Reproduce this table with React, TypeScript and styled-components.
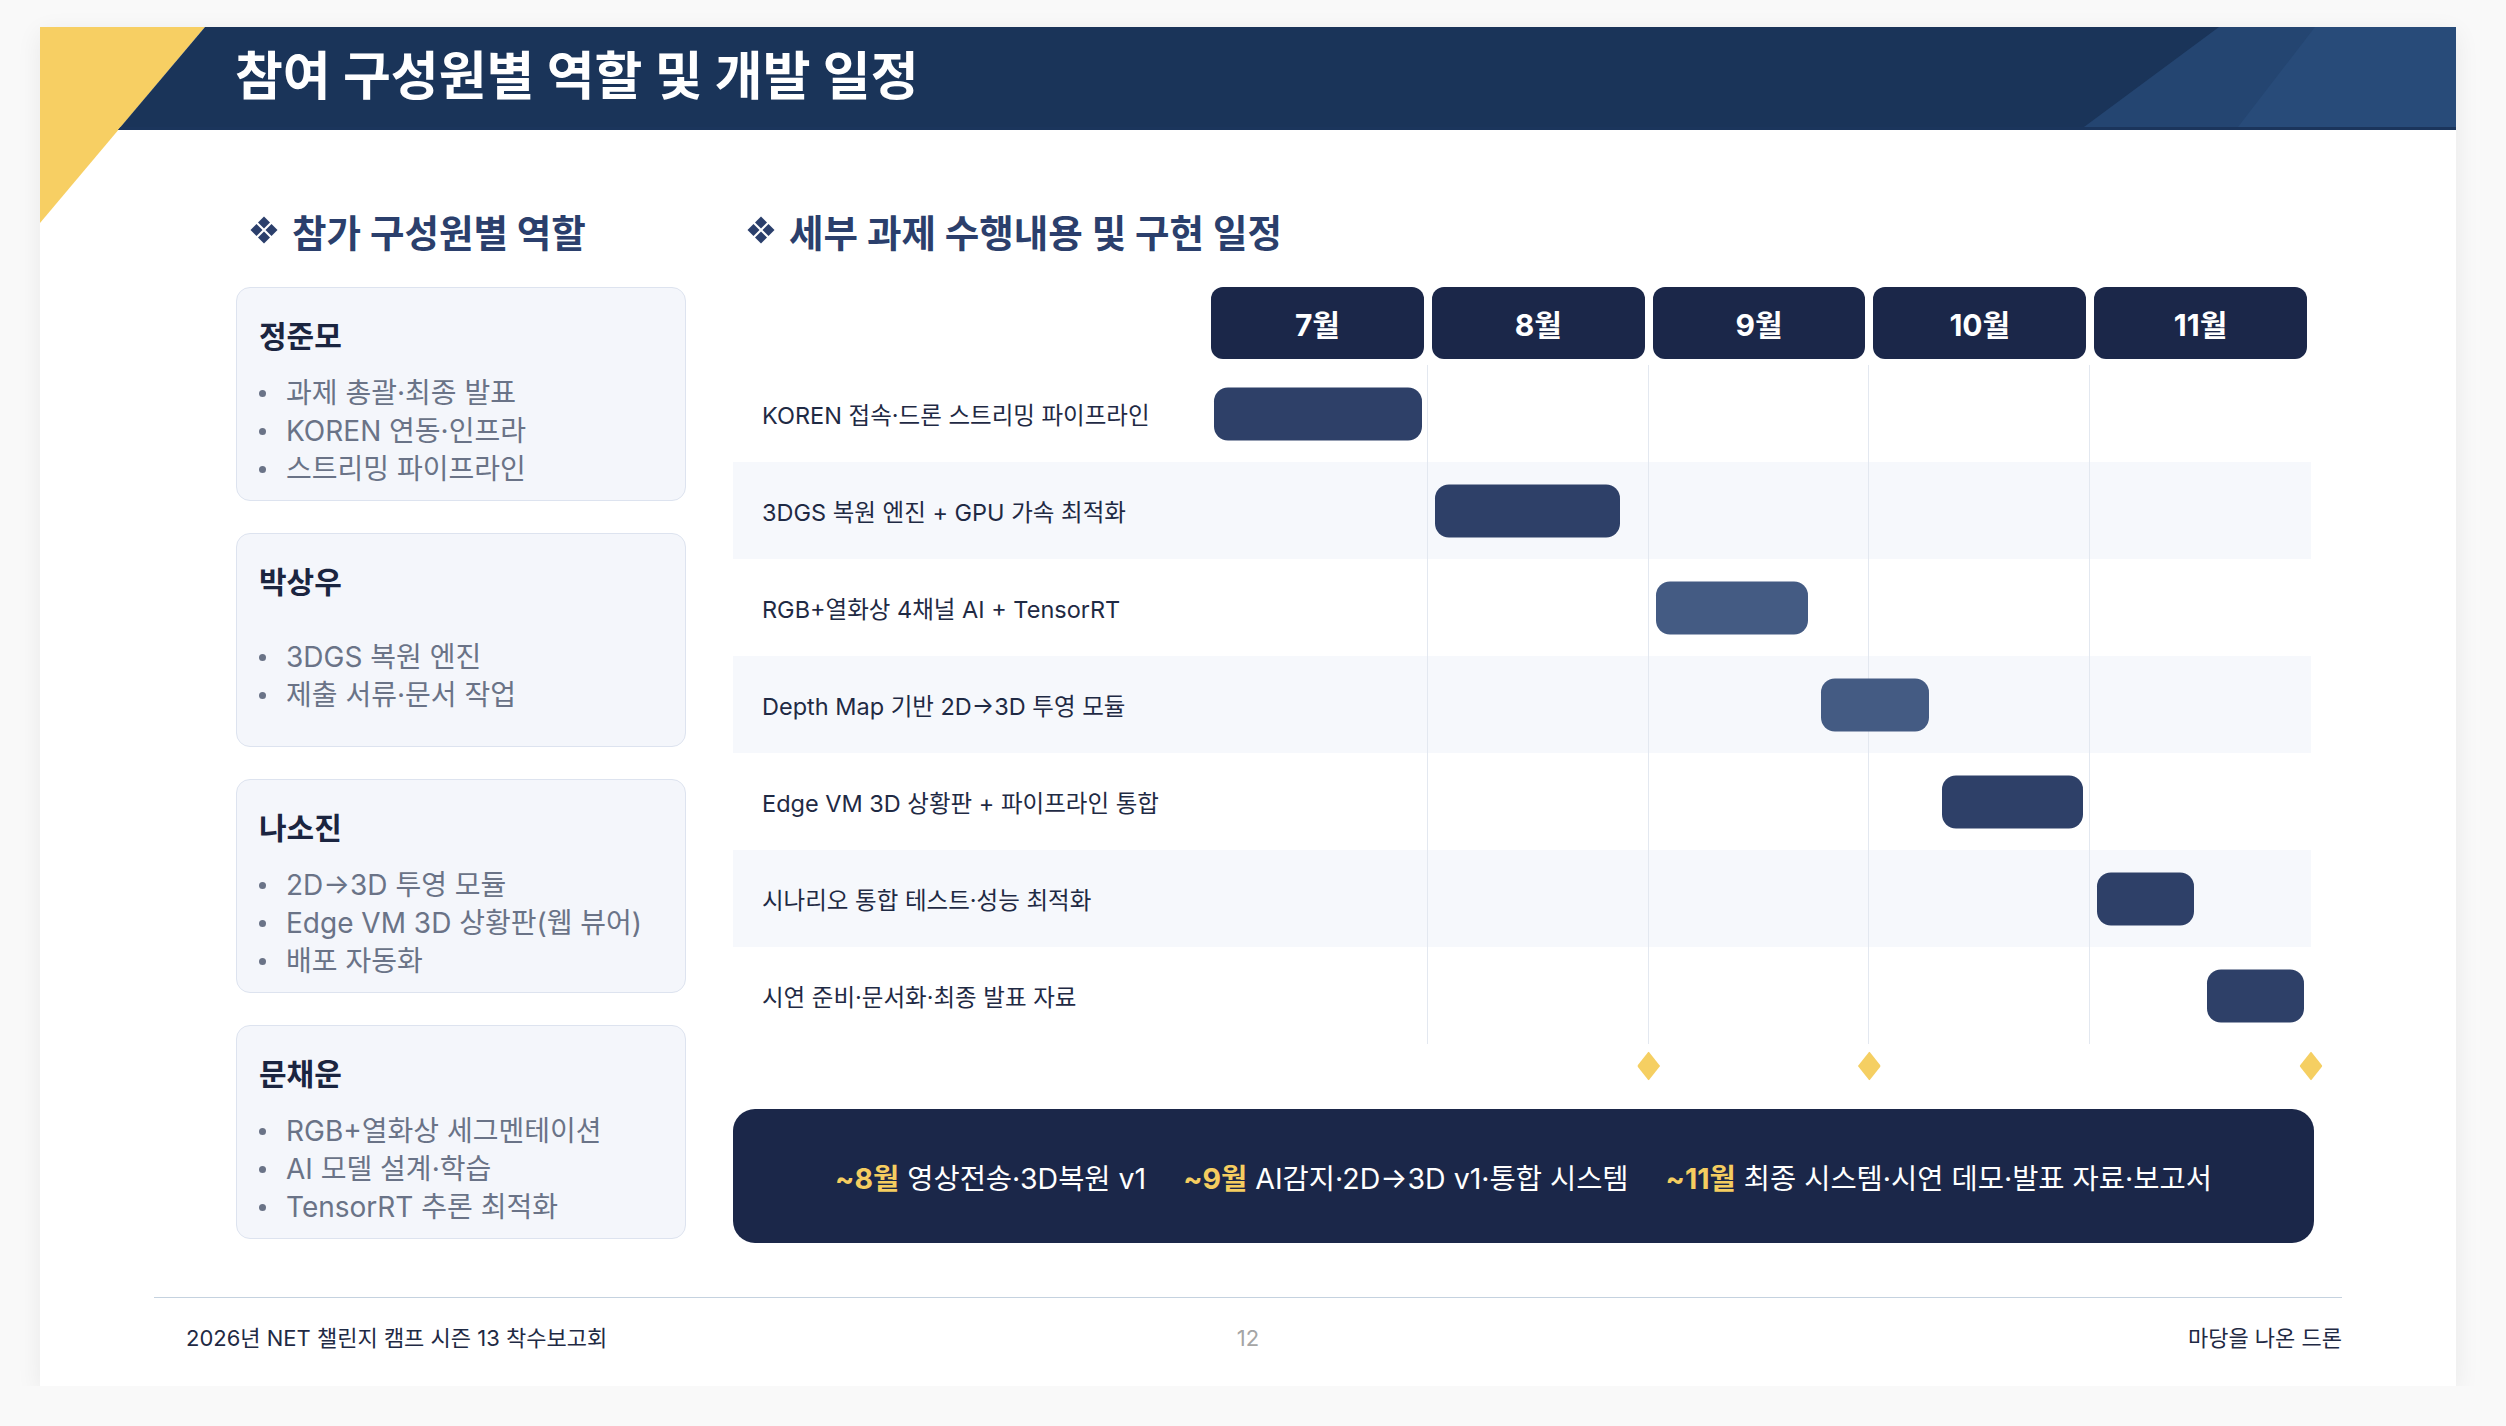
import React from "react";
import styled, { createGlobalStyle } from "styled-components";

const GlobalStyle = createGlobalStyle`
  html, body {
    margin: 0;
    padding: 0;
    background: #f9f9f9;
    font-family: Inter, "Noto Sans CJK KR", "Noto Sans", sans-serif;
  }
  * {
    box-sizing: border-box;
  }
`;

const Slide = styled.div`
  position: relative;
  width: 2416px;
  height: 1359px;
  margin: 27px 0 0 40px;
  background: #ffffff;
  box-shadow: 0 6px 24px rgba(0, 0, 0, 0.07);
  display: flex;
  flex-direction: column;
  overflow: hidden;
`;

const CornerTriangle = styled.div`
  position: absolute;
  top: 0;
  left: 0;
  width: 165px;
  height: 196px;
  background: #f7cf63;
  clip-path: polygon(0 0, 100% 0, 0 100%);
`;

const Header = styled.header`
  position: relative;
  height: 103px;
  flex-shrink: 0;
  display: flex;
  align-items: center;
  padding-left: 195px;
  background: #1a3459;
  border-bottom: 3px solid #1b355c;
  clip-path: polygon(165px 0, 100% 0, 100% 100%, 78px 100%);
`;

const HeaderDecor = styled.span<{ $w: number; $slant: number; $color: string }>`
  position: absolute;
  top: 0;
  right: 0;
  height: 100px;
  width: ${(p) => p.$w}px;
  background: ${(p) => p.$color};
  clip-path: polygon(${(p) => p.$slant}px 0, 100% 0, 100% 100%, 0 100%);
`;

const Title = styled.h1`
  position: relative;
  margin: 0;
  font-size: 52px;
  font-weight: 700;
  color: #ffffff;
  line-height: 1;
`;

const Main = styled.main`
  display: flex;
  gap: 47px;
  padding: 78px 142px 0 196px;
`;

const LeftCol = styled.section`
  width: 450px;
  flex-shrink: 0;
  display: flex;
  flex-direction: column;
`;

const RightCol = styled.section`
  flex: 1;
  display: flex;
  flex-direction: column;
`;

const SectionTitle = styled.h2`
  margin: 0 0 35px;
  height: 44px;
  padding-left: 13px;
  display: flex;
  align-items: center;
  gap: 13px;
  font-size: 37.5px;
  font-weight: 700;
  color: #2b3f6c;
`;

const CardList = styled.div`
  display: flex;
  flex-direction: column;
  gap: 32px;
`;

const Card = styled.div`
  height: 214px;
  padding: 30px 24px 14px 22px;
  background: #f4f6fb;
  border: 1.5px solid #dde3ef;
  border-radius: 14px;
  display: flex;
  flex-direction: column;
`;

const MemberName = styled.div`
  font-size: 30px;
  font-weight: 700;
  line-height: 36px;
  color: #1b2540;
`;

const Duties = styled.ul`
  flex: 1;
  margin: 20px 0 0;
  padding: 0;
  list-style: none;
  display: flex;
  flex-direction: column;
  justify-content: center;
`;

const Duty = styled.li`
  display: flex;
  align-items: center;
  font-size: 28px;
  line-height: 38px;
  color: #6a7387;

  &::before {
    content: "";
    width: 7px;
    height: 7px;
    border-radius: 50%;
    background: #6a7387;
    margin-right: 20px;
    flex-shrink: 0;
  }
`;

const LABEL_W = 474;
const COL_W = 220.8;

const MonthRow = styled.div`
  display: grid;
  grid-template-columns: ${LABEL_W}px repeat(5, ${COL_W}px);
  height: 72px;
  margin-bottom: 6px;
`;

const MonthCell = styled.div`
  padding: 0 4px;
`;

const MonthBox = styled.div`
  height: 100%;
  border-radius: 12px;
  background: #1b2749;
  color: #ffffff;
  font-size: 30px;
  font-weight: 700;
  display: flex;
  align-items: center;
  justify-content: center;
`;

const Rows = styled.div`
  position: relative;
  width: ${LABEL_W + COL_W * 5}px;
`;

const GridLines = styled.div`
  position: absolute;
  top: 0;
  bottom: 0;
  left: ${LABEL_W}px;
  right: 0;
  z-index: 1;
  pointer-events: none;
  display: grid;
  grid-template-columns: repeat(5, 1fr);

  & > span {
    border-right: 1.5px solid #e3e8f0;
  }
  & > span:last-child {
    border-right: none;
  }
`;

const TaskRow = styled.div<{ $striped: boolean }>`
  display: grid;
  grid-template-columns: ${LABEL_W}px 1fr;
  height: 97px;
  background: ${(p) => (p.$striped ? "#f6f8fc" : "#ffffff")};
`;

const TaskLabel = styled.div`
  display: flex;
  align-items: center;
  padding-left: 29px;
  font-size: 23.5px;
  color: #1f2a44;
`;

const Track = styled.div`
  position: relative;
`;

const Bar = styled.div<{ $light: boolean }>`
  position: absolute;
  top: 50%;
  transform: translateY(-50%);
  height: 53px;
  border-radius: 14px;
  z-index: 2;
  background: ${(p) => (p.$light ? "#445b83" : "#2e4068")};
`;

const MilestoneRow = styled.div`
  display: grid;
  grid-template-columns: ${LABEL_W}px ${COL_W * 5}px;
  height: 44px;
`;

const Diamond = styled.span`
  position: absolute;
  top: 50%;
  width: 23px;
  height: 29px;
  transform: translate(-50%, -50%);
  background: #f5cf62;
  clip-path: polygon(50% 0, 100% 50%, 50% 100%, 0 50%);
`;

const Legend = styled.div`
  margin-top: 21px;
  height: 134px;
  border-radius: 22px;
  background: #1b2749;
  display: flex;
  align-items: center;
  justify-content: center;
  gap: 37px;
  font-size: 28.5px;
  color: #ffffff;
`;

const LegendItem = styled.span`
  white-space: nowrap;

  & > b {
    color: #f5cd60;
    font-weight: 700;
    margin-right: 8px;
  }
`;

const Footer = styled.footer`
  margin: auto 114px 0 114px;
  border-top: 1.5px solid #c5d2df;
  padding: 28px 0 36px;
  display: grid;
  grid-template-columns: 1fr auto 1fr;
  align-items: center;
  font-size: 22px;
  line-height: 24px;
  color: #1f2a44;
`;

const FooterLeft = styled.div`
  padding-left: 32px;
`;

const PageNo = styled.div`
  font-size: 22px;
  color: #a5a5a5;
`;

const FooterRight = styled.div`
  text-align: right;
`;

const FourDiamonds = () => (
  <svg width="30" height="30" viewBox="0 0 30 30" aria-hidden="true">
    <g fill="#2b3f6c">
      <path d="M15 1.5 L21 7.5 L15 13.5 L9 7.5 Z" />
      <path d="M7.5 9 L13.5 15 L7.5 21 L1.5 15 Z" />
      <path d="M22.5 9 L28.5 15 L22.5 21 L16.5 15 Z" />
      <path d="M15 16.5 L21 22.5 L15 28.5 L9 22.5 Z" />
    </g>
  </svg>
);

const members = [
  { name: "정준모", duties: ["과제 총괄·최종 발표", "KOREN 연동·인프라", "스트리밍 파이프라인"] },
  { name: "박상우", duties: ["3DGS 복원 엔진", "제출 서류·문서 작업"] },
  { name: "나소진", duties: ["2D→3D 투영 모듈", "Edge VM 3D 상황판(웹 뷰어)", "배포 자동화"] },
  { name: "문채운", duties: ["RGB+열화상 세그멘테이션", "AI 모델 설계·학습", "TensorRT 추론 최적화"] },
];

const months = ["7월", "8월", "9월", "10월", "11월"];

// start / width in px along the 5-month track
const tasks = [
  { label: "KOREN 접속·드론 스트리밍 파이프라인", start: 7, width: 208, light: false },
  { label: "3DGS 복원 엔진 + GPU 가속 최적화", start: 228, width: 185, light: false },
  { label: "RGB+열화상 4채널 AI + TensorRT", start: 449, width: 152, light: true },
  { label: "Depth Map 기반 2D→3D 투영 모듈", start: 614, width: 108, light: true },
  { label: "Edge VM 3D 상황판 + 파이프라인 통합", start: 735, width: 141, light: false },
  { label: "시나리오 통합 테스트·성능 최적화", start: 890, width: 97, light: false },
  { label: "시연 준비·문서화·최종 발표 자료", start: 1000, width: 97, light: false },
];

const milestones = [2, 3, 5];

const TRACK_W = COL_W * 5;

export default function App() {
  return (
    <>
      <GlobalStyle />
      <Slide>
        <CornerTriangle />
        <Header>
          <HeaderDecor $w={372} $slant={135} $color="#244571" />
          <HeaderDecor $w={218} $slant={77} $color="#284b79" />
          <Title>참여 구성원별 역할 및 개발 일정</Title>
        </Header>

        <Main>
          <LeftCol>
            <SectionTitle>
              <FourDiamonds />
              참가 구성원별 역할
            </SectionTitle>
            <CardList>
              {members.map((m) => (
                <Card key={m.name}>
                  <MemberName>{m.name}</MemberName>
                  <Duties>
                    {m.duties.map((d) => (
                      <Duty key={d}>{d}</Duty>
                    ))}
                  </Duties>
                </Card>
              ))}
            </CardList>
          </LeftCol>

          <RightCol>
            <SectionTitle>
              <FourDiamonds />
              세부 과제 수행내용 및 구현 일정
            </SectionTitle>

            <MonthRow>
              <div />
              {months.map((m) => (
                <MonthCell key={m}>
                  <MonthBox>{m}</MonthBox>
                </MonthCell>
              ))}
            </MonthRow>

            <Rows>
              <GridLines>
                {months.map((m) => (
                  <span key={m} />
                ))}
              </GridLines>
              {tasks.map((t, i) => (
                <TaskRow key={t.label} $striped={i % 2 === 1}>
                  <TaskLabel>{t.label}</TaskLabel>
                  <Track>
                    <Bar
                      $light={t.light}
                      style={{
                        left: `${(t.start / TRACK_W) * 100}%`,
                        width: `${(t.width / TRACK_W) * 100}%`,
                      }}
                    />
                  </Track>
                </TaskRow>
              ))}
            </Rows>

            <MilestoneRow>
              <div />
              <Track>
                {milestones.map((m) => (
                  <Diamond key={m} style={{ left: `${(m / 5) * 100}%` }} />
                ))}
              </Track>
            </MilestoneRow>

            <Legend>
              <LegendItem>
                <b>~8월</b>영상전송·3D복원 v1
              </LegendItem>
              <LegendItem>
                <b>~9월</b>AI감지·2D→3D v1·통합 시스템
              </LegendItem>
              <LegendItem>
                <b>~11월</b>최종 시스템·시연 데모·발표 자료·보고서
              </LegendItem>
            </Legend>
          </RightCol>
        </Main>

        <Footer>
          <FooterLeft>2026년 NET 챌린지 캠프 시즌 13 착수보고회</FooterLeft>
          <PageNo>12</PageNo>
          <FooterRight>마당을 나온 드론</FooterRight>
        </Footer>
      </Slide>
    </>
  );
}
